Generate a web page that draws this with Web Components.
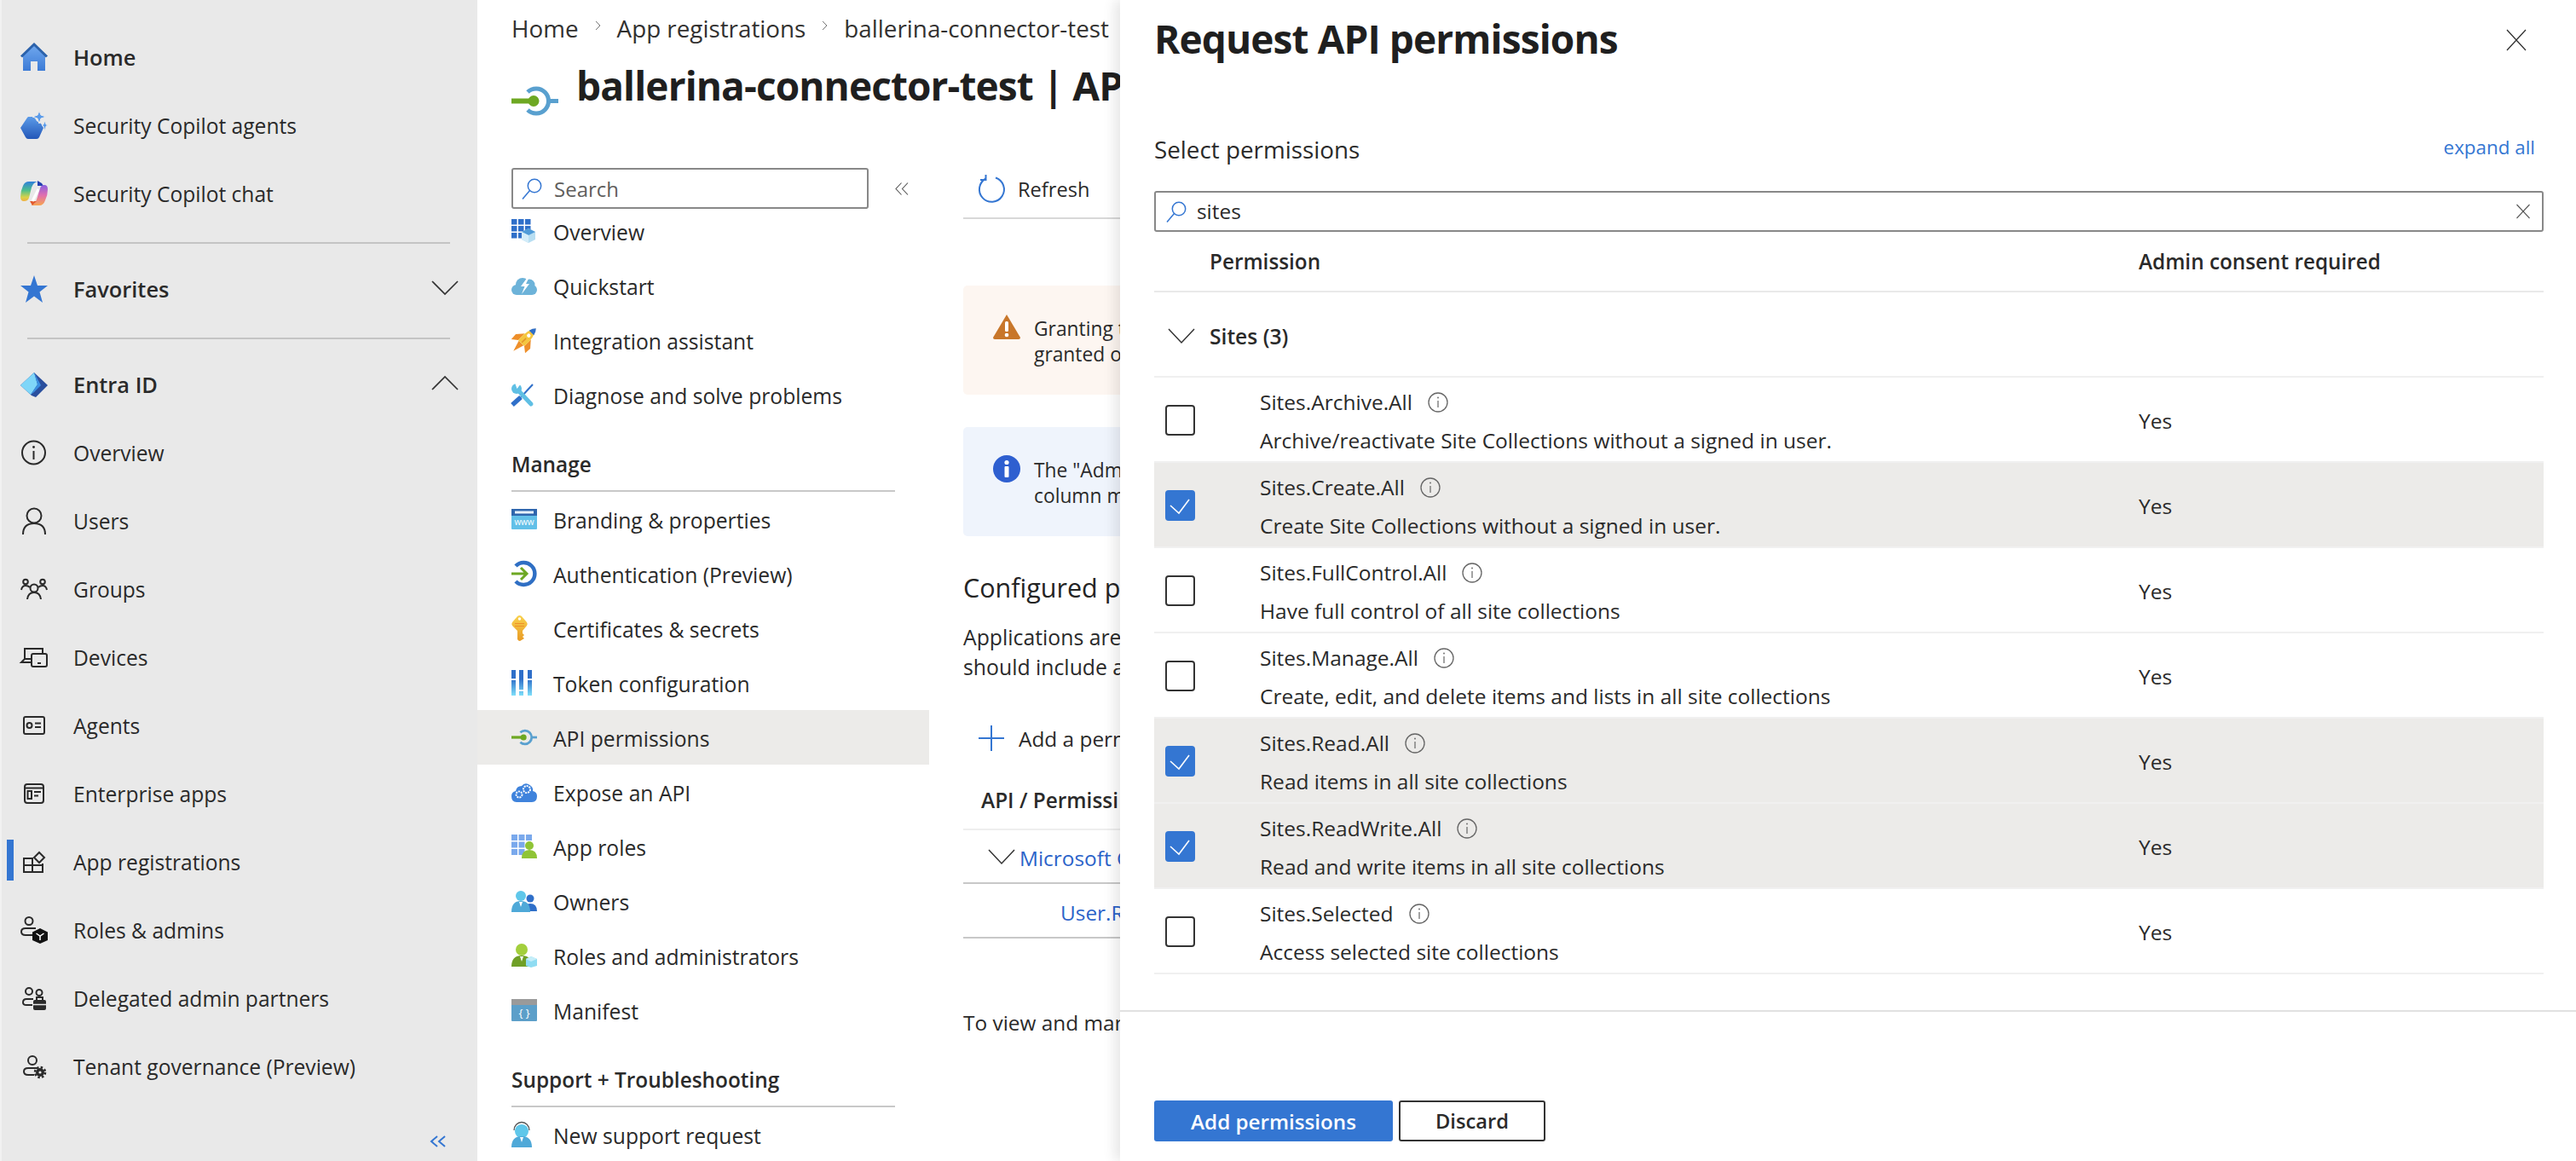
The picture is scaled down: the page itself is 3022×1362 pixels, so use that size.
<!DOCTYPE html>
<html lang="en">
<head>
<meta charset="utf-8">
<title>Request API permissions</title>
<style>
html,body{margin:0;padding:0;width:3022px;height:1362px;overflow:hidden;background:#3d6a5f}
body{font-family:"Open Sans","Noto Sans",sans-serif;font-size:24.6px;color:#2a2a2a}
</style>
</head>
<body>
<app-shell>
  <left-nav>
    <nav-row icon="home" strong>Home</nav-row>
    <nav-row icon="agents">Security Copilot agents</nav-row>
    <nav-row icon="chat">Security Copilot chat</nav-row>
    <nav-rule></nav-rule>
    <nav-row icon="star" strong chevron="down">Favorites</nav-row>
    <nav-rule></nav-rule>
    <nav-row icon="entra" strong chevron="up">Entra ID</nav-row>
    <nav-row icon="ninfo">Overview</nav-row>
    <nav-row icon="user">Users</nav-row>
    <nav-row icon="groups">Groups</nav-row>
    <nav-row icon="devices">Devices</nav-row>
    <nav-row icon="idcard">Agents</nav-row>
    <nav-row icon="entapps">Enterprise apps</nav-row>
    <nav-row icon="appreg" active>App registrations</nav-row>
    <nav-row icon="rolesnav">Roles &amp; admins</nav-row>
    <nav-row icon="delegated">Delegated admin partners</nav-row>
    <nav-row icon="tenant">Tenant governance (Preview)</nav-row>
    <nav-collapse></nav-collapse>
  </left-nav>
  <main-area>
    <crumb-bar>
      <span>Home</span><x-icon name="crumb"></x-icon><span>App registrations</span><x-icon name="crumb"></x-icon><span>ballerina-connector-test</span>
    </crumb-bar>
    <page-title>ballerina-connector-test | API permissions</page-title>
    <blade-body>
      <res-menu>
        <menu-search></menu-search>
        <menu-list>
          <menu-row icon="m-overview">Overview</menu-row>
          <menu-row icon="m-quick">Quickstart</menu-row>
          <menu-row icon="m-rocket">Integration assistant</menu-row>
          <menu-row icon="m-tools">Diagnose and solve problems</menu-row>
          <menu-head>Manage</menu-head>
          <menu-row icon="m-www">Branding &amp; properties</menu-row>
          <menu-row icon="m-auth">Authentication (Preview)</menu-row>
          <menu-row icon="m-key">Certificates &amp; secrets</menu-row>
          <menu-row icon="m-token">Token configuration</menu-row>
          <menu-row icon="m-api" selected>API permissions</menu-row>
          <menu-row icon="m-expose">Expose an API</menu-row>
          <menu-row icon="m-roles">App roles</menu-row>
          <menu-row icon="m-owners">Owners</menu-row>
          <menu-row icon="m-admins">Roles and administrators</menu-row>
          <menu-row icon="m-manifest">Manifest</menu-row>
          <menu-head>Support + Troubleshooting</menu-head>
          <menu-row icon="m-support">New support request</menu-row>
        </menu-list>
      </res-menu>
      <blade-content></blade-content>
    </blade-body>
  </main-area>
  <perm-panel>
    <perm-row title-text="Sites.Archive.All" desc="Archive/reactivate Site Collections without a signed in user."></perm-row>
    <perm-row checked title-text="Sites.Create.All" desc="Create Site Collections without a signed in user."></perm-row>
    <perm-row title-text="Sites.FullControl.All" desc="Have full control of all site collections"></perm-row>
    <perm-row title-text="Sites.Manage.All" desc="Create, edit, and delete items and lists in all site collections"></perm-row>
    <perm-row checked title-text="Sites.Read.All" desc="Read items in all site collections"></perm-row>
    <perm-row checked title-text="Sites.ReadWrite.All" desc="Read and write items in all site collections"></perm-row>
    <perm-row title-text="Sites.Selected" desc="Access selected site collections"></perm-row>
  </perm-panel>
</app-shell>

<script>
const apiIcon = `<path d="M19 6A14.5 14.5 0 1 1 19 27" fill="none" stroke="#59a0cf" stroke-width="5"/><path d="M42 16.5H55" stroke="#59a0cf" stroke-width="5"/><path d="M0 16.5H26" stroke="#6ea823" stroke-width="6"/><circle cx="26" cy="16.5" r="6.5" fill="#6ea823"/>`;
const S = 'fill="none" stroke="#2a2a2a" stroke-width="2"';
const ICONS = {
  home:[32,34,`<defs><linearGradient id="g" x1="0" y1="0" x2="0" y2="1"><stop offset="0" stop-color="#70a8ee"/><stop offset="1" stop-color="#3c7bd6"/></linearGradient></defs><path d="M16 3 3 14V33H12V22H20V33H29V14Z" fill="url(#g)"/><path d="M1 16.500 16 2 31 16.500" fill="none" stroke="#2b62ab" stroke-width="3"/>`],
  agents:[32,34,`<defs><linearGradient id="g" x1="0" y1="0" x2="0" y2="1"><stop offset="0" stop-color="#5b9be8"/><stop offset="1" stop-color="#2357b8"/></linearGradient></defs><path d="M9 7H16L19 12 24 15 27 20 22 31Q21 33 19 33H9Q7 33 6 31L0 20 8 8Z" fill="url(#g)"/><path d="M22 0 24 5 30 7 24 9 22 15 20 9 14 7 20 5Z" fill="#5a9bea" stroke="#e9e9e9" stroke-width="1"/><path d="M28.500 12 30 16 32 17 30 18 28.500 23 27 18 25 17 27 16Z" fill="#5a9bea" stroke="#e9e9e9" stroke-width=".8"/>`],
  chat:[32,30,`<defs><linearGradient id="a" x1="0" y1="0" x2="0" y2="1"><stop offset="0" stop-color="#2f7fdc"/><stop offset=".45" stop-color="#4fc08a"/><stop offset=".8" stop-color="#d9d24a"/><stop offset="1" stop-color="#f0b040"/></linearGradient><linearGradient id="b" x1="0" y1="0" x2="0" y2="1"><stop offset="0" stop-color="#8a5fe0"/><stop offset=".5" stop-color="#e06fb0"/><stop offset="1" stop-color="#f7a44e"/></linearGradient></defs><path d="M20 0 25 3 27 6H20Z" fill="#2340b0"/><path d="M10 1H20Q15 2 13 8L10 20Q9 24 4 24 0 24 0 19 0 12 3 6 5 1 10 1Z" fill="url(#a)"/><path d="M22 29H12Q17 28 19 22L23 9Q24 5 28 5 32 5 32 10 32 17 29 23 27 29 22 29Z" fill="url(#b)"/><path d="M11 24 14 29 19 24Z" fill="#e25a2e"/><path d="M21 10 14 24" stroke="#fff" stroke-width="3"/>`],
  star:[32,32,`<path d="M16 0 20 12H32L22.500 19.500 26 32 16 24.500 6 32 9.500 19.500 0 12H12Z" fill="#3476d2"/>`],
  entra:[32,29,`<path d="M16 0 0 15 13 27 18 29 32 15Z" fill="#2a4f9e"/><path d="M16 0 0 15 12 26 20 14Z" fill="#7fd6f8"/><path d="M16 0 24 15 16 23 12 26 20 14Z" fill="#3b8ee0"/>`],
  ninfo:[30,30,`<circle cx="14.500" cy="15" r="13.500" ${S}/><path d="M14.500 13V23" ${S}/><circle cx="14.500" cy="8.500" r="1.400" fill="#2a2a2a"/>`],
  user:[32,32,`<circle cx="16" cy="10" r="8.500" ${S}/><path d="M3 32Q3 19 16 19 29 19 29 32" ${S}/>`],
  groups:[32,24,`<circle cx="16" cy="11" r="4.500" ${S}/><path d="M8 24Q9 16 16 16 23 16 24 24" ${S}/><circle cx="6" cy="3.500" r="2.800" ${S}/><circle cx="26" cy="3.500" r="2.800" ${S}/><path d="M1 13Q2 8 6 8 9 8 11 10M31 13Q30 8 26 8 23 8 21 10" ${S}/>`],
  devices:[32,24,`<path d="M5 14V2H26V7M12 18H1L5 14H12" ${S}/><rect x="13" y="8" width="18" height="15" rx="2" ${S}/><path d="M20 19H24" ${S}/>`],
  idcard:[26,22,`<rect x="1" y="1" width="24" height="20" rx="2" ${S}/><circle cx="7.500" cy="11" r="3" ${S}/><path d="M14 8.500H21M14 13H21" ${S}/>`],
  entapps:[24,24,`<rect x="1" y="1" width="22" height="22" rx="3" ${S}/><path d="M1 5.500H23M12 10H20M12 14.500H17" ${S}/><rect x="4.500" y="9" width="4.500" height="9" ${S}/>`],
  appreg:[26,25,`<path d="M1 8H11V24H1ZM1 16H23V24H11M11 16H23V14" ${S}/><path d="M19 1 25 7 19 13 13 7Z" ${S}/>`],
  rolesnav:[32,32,`<circle cx="10" cy="5.500" r="4.500" ${S}/><path d="M18 14H6Q1 14 1 18 1 22 6 22H14" ${S}/><path d="M23 14 32 18.500V28L23 32 14 28V18.500Z" fill="#111"/><path d="M18.500 20 23 23 27.500 20M23 23V28" fill="none" stroke="#fff" stroke-width="1.500"/>`],
  delegated:[28,27,`<circle cx="8" cy="5" r="4" ${S}/><circle cx="20" cy="6.500" r="3.500" ${S}/><path d="M13 14H5Q1 14 1 18 1 21 5 21H12" ${S}/><rect x="13" y="15" width="15" height="12" rx="2" fill="#2a2a2a"/><path d="M17 15V12H24V15" ${S}/><path d="M13 20.500H28" stroke="#e9e9e9" stroke-width="1.500"/>`],
  tenant:[27,27,`<circle cx="11" cy="6" r="5" ${S}/><path d="M17 15H6Q1 15 1 19 1 23 6 23H13" ${S}/><circle cx="20" cy="20" r="5" fill="#2a2a2a"/><circle cx="20" cy="20" r="6" fill="none" stroke="#2a2a2a" stroke-width="2.500" stroke-dasharray="2.500 2.200"/><circle cx="20" cy="20" r="1.600" fill="#e9e9e9"/>`],
  chevdown:[32,17,`<path d="M1 1 16 16 31 1" fill="none" stroke="#333" stroke-width="1.700"/>`],
  chevup:[32,17,`<path d="M1 16 16 1 31 16" fill="none" stroke="#333" stroke-width="1.700"/>`],
  collapse:[20,14,`<path d="M9 1 2 7 9 13M18 1 11 7 18 13" fill="none" stroke="#3476d2" stroke-width="2"/>`],
  crumb:[7,12,`<path d="M1 1 6 6 1 11" fill="none" stroke="#777" stroke-width="1"/>`],
  app:[55,33,apiIcon],
  search:[24,25,`<circle cx="15" cy="9" r="7.700" fill="none" stroke="#3476d2" stroke-width="1.500"/><path d="M9.500 14.500 1 24.500" stroke="#3476d2" stroke-width="1.500"/>`],
  menucollapse:[16,15,`<path d="M7.500 .5 1 7.500 7.500 14.500M15 .5 8.500 7.500 15 14.500" fill="none" stroke="#555" stroke-width="1.100"/>`],
  refresh:[32,33,`<path d="M21 3.500A14.500 14.500 0 1 1 9.500 4.500" fill="none" stroke="#3476d2" stroke-width="2"/><path d="M9.500 0V6H3" fill="none" stroke="#3476d2" stroke-width="2"/>`],
  warn:[32,30,`<path d="M16 1 32 28Q32 30 30 30H2Q0 30 0 28Z" fill="#c8762a"/><rect x="14" y="9" width="4" height="12" rx="1.500" fill="#fff"/><circle cx="16" cy="25" r="2.300" fill="#fff"/>`],
  info:[32,32,`<circle cx="16" cy="16" r="16" fill="#2e5fd0"/><circle cx="16" cy="8.500" r="2.600" fill="#fff"/><rect x="13.500" y="13" width="5" height="13" rx="1" fill="#fff"/>`],
  plus:[30,30,`<path d="M15 0V30M0 15H30" stroke="#3476d2" stroke-width="2"/>`],
  chevsmall:[32,18,`<path d="M1 1 16 17 31 1" fill="none" stroke="#333" stroke-width="1.500"/>`],
  close:[24,24,`<path d="M1 0 23 24M23 0 1 24" stroke="#333" stroke-width="1.300"/>`],
  clear:[16,16,`<path d="M.5 0 15.500 16M15.500 0 .5 16" stroke="#555" stroke-width="1.100"/>`],
  tick:[35,36,`<path d="M6 18 16 27 28 11" fill="none" stroke="#fff" stroke-width="1.600"/>`],
  rowinfo:[24,24,`<circle cx="12" cy="12" r="11" fill="none" stroke="#666" stroke-width="1.300"/><path d="M12 10V18" stroke="#666" stroke-width="1.200"/><circle cx="12" cy="6.500" r=".9" fill="#666"/>`],
  "m-overview":[28,28,`<g fill="#2f6fc9"><rect width="6.500" height="6.500"/><rect x="8" width="6.500" height="6.500"/><rect x="16" width="6.500" height="6.500"/><rect y="8" width="6.500" height="6.500"/><rect x="8" y="8" width="6.500" height="6.500"/><rect x="16" y="8" width="6.500" height="6.500"/><rect y="16" width="6.500" height="6.500"/><rect x="8" y="16" width="6.500" height="6.500"/></g><path d="M20 11 28 15V24L20 28 12 24V15Z" fill="#b7def2"/><path d="M12 15 20 19 28 15 20 11Z" fill="#4f9bd8"/><path d="M20 19V28L12 24V15Z" fill="#d3ecf8"/>`],
  "m-quick":[30,21,`<g fill="#6db3d9"><circle cx="6" cy="15" r="6"/><circle cx="13" cy="9" r="8"/><circle cx="21" cy="9" r="6.500"/><circle cx="24" cy="15" r="6"/><rect x="6" y="12" width="18" height="9"/></g><path d="M19 0 11 11H15.500L12 20 21 8H17L21 0Z" fill="#fff"/>`],
  "m-rocket":[30,30,`<g transform="rotate(45 15 15)"><path d="M11 20H19L15 33Z" fill="#ee8f2a"/><path d="M10 9 3 17 3.500 25 10 20Z" fill="#ee8f2a"/><path d="M20 9 27 17 26.500 25 20 20Z" fill="#ee8f2a"/><path d="M15 -4Q21.500 4 20 20H10Q8.500 4 15 -4Z" fill="#f4c63f"/><path d="M15 -4.500Q18 -1.500 19 3H11Q12 -1.500 15 -4.500Z" fill="#2f6fc9"/><circle cx="15" cy="7.500" r="2.200" fill="#fff"/><path d="M15 12V19" stroke="#e2952a" stroke-width="1.500"/></g>`],
  "m-tools":[26,27,`<path d="M1 25 11 16" stroke="#2f6fc9" stroke-width="5.500"/><path d="M11 16 25 1" stroke="#2f6fc9" stroke-width="2"/><path d="M7 7 23 24" stroke="#5fbfe4" stroke-width="5" stroke-linecap="round"/><circle cx="6" cy="6" r="6" fill="#5fbfe4"/><path d="M4-1H12L6.500 6Z" fill="#fff"/>`],
  "m-www":[30,24,`<rect width="30" height="24" rx="1" fill="#62c0e8"/><rect width="30" height="8" fill="#2f66ad"/><rect x="4" y="2.500" width="22" height="3" fill="#e8f2fb"/><text x="15" y="19" font-size="10" fill="#fff" text-anchor="middle" font-family="Open Sans">www</text>`],
  "m-auth":[27,30,`<path d="M5 6A13 13 0 1 1 5 24" fill="none" stroke="#2f6fc4" stroke-width="4.500"/><path d="M0 15H18M11 8 18 15 11 22" fill="none" stroke="#6ea823" stroke-width="3"/>`],
  "m-key":[20,30,`<defs><linearGradient id="k" x1="0" y1="0" x2="0" y2="1"><stop offset="0" stop-color="#f9d24e"/><stop offset="1" stop-color="#e89a24"/></linearGradient></defs><path d="M9.500 0Q11 0 12 1L18 8Q19.500 10 18 12L13 18V21L15 23 13 25 15 27 10 30Q8 30 7 28V18L1 12Q-.5 10 1 8L7 1Q8 0 9.500 0Z" fill="url(#k)"/><circle cx="9.500" cy="4" r="1.700" fill="#fff"/><path d="M4 9.500H15M4 12.500H15" stroke="#ee8f2a" stroke-width="1.200"/>`],
  "m-token":[24,30,`<defs><linearGradient id="t" x1="0" y1="0" x2="0" y2="1"><stop offset="0" stop-color="#2f6fc9"/><stop offset=".35" stop-color="#2f6fc9"/><stop offset="1" stop-color="#7fe0fa"/></linearGradient></defs><rect x="0" width="5" height="30" fill="url(#t)"/><rect x="9" width="5" height="30" fill="url(#t)"/><rect x="19" width="5" height="30" fill="url(#t)"/><g fill="#e8f2fb"><rect y="10" width="5" height="2"/><rect x="9" y="23" width="5" height="2"/><rect x="19" y="10" width="5" height="2"/></g>`],
  "m-api":[30,18,`<g transform="scale(.545)">${apiIcon}</g>`],
  "m-expose":[30,23,`<path d="M6 23Q0 23 0 16 0 11 5 10 6 4 12 4 15 0 20 2 26 5 25 10 30 11 30 16 30 23 24 23Z" fill="#3f83dc"/><circle cx="9" cy="14" r="3.500" fill="none" stroke="#fff" stroke-width="2" stroke-dasharray="2 1"/><circle cx="18" cy="8" r="4" fill="none" stroke="#fff" stroke-width="2" stroke-dasharray="2 1"/>`],
  "m-roles":[30,28,`<g fill="#7aa9ec"><rect width="7" height="7"/><rect x="8.500" width="7" height="7"/><rect x="17" width="7" height="7"/><rect y="8.500" width="7" height="7"/><rect x="8.500" y="8.500" width="7" height="7"/><rect y="17" width="7" height="7"/><rect x="8.500" y="17" width="7" height="7"/></g><circle cx="21" cy="13" r="5" fill="#8fc436"/><path d="M12 28Q12 18 21 18 30 18 30 28Z" fill="#8fc436"/>`],
  "m-owners":[30,25,`<circle cx="22" cy="9" r="4.500" fill="#2f6fc9"/><path d="M15 24Q15 15 22 15 30 15 30 24Z" fill="#2f6fc9"/><circle cx="11" cy="6" r="6" fill="#5fc7ea"/><path d="M0 25Q0 12 11 12 22 12 22 25Z" fill="#4fa9d8"/><path d="M9 13H13L11 19Z" fill="#fff"/>`],
  "m-admins":[30,28,`<circle cx="12" cy="7" r="7" fill="#a3cf3d"/><path d="M0 27Q0 14 12 14 24 14 24 27Z" fill="#6f9f26"/><path d="M10 15H14L12 21Z" fill="#fff"/><path d="M23 15 30 18V26L23 28 17 26V18Z" fill="#8fdcf2"/><path d="M17 18 23 21 30 18 23 15Z" fill="#c6eef9"/>`],
  "m-manifest":[30,26,`<rect width="30" height="26" rx="1" fill="#5c9fc9"/><rect width="30" height="7" fill="#9a9a9a"/><text x="15" y="21" font-size="13" fill="#fff" text-anchor="middle" font-family="Open Sans">{ }</text>`],
  "m-support":[24,30,`<circle cx="12" cy="11" r="8" fill="#5fc7ea"/><path d="M0 30Q0 17 12 17 24 17 24 30Z" fill="#4fa9d8"/><path d="M10 18H14L12 24Z" fill="#fff"/><path d="M3 10A9 9.500 0 0 1 21 10" fill="none" stroke="#555" stroke-width="1.300"/>`],
};

function define(name, render) {
  customElements.define(name, class extends HTMLElement {
    connectedCallback() {
      if (this.shadowRoot) return;
      this.attachShadow({mode:"open"}).innerHTML = render(this);
    }
  });
}

define("x-icon", el => {
  const [w,h,body] = ICONS[el.getAttribute("name")];
  return `<style>:host{display:inline-flex;flex:none;line-height:0}</style><svg width="${w}" height="${h}" viewBox="0 0 ${w} ${h}" overflow="visible">${body}</svg>`;
});

define("app-shell", () => `<style>:host{display:flex;position:relative;width:3022px;height:1362px;overflow:hidden;background:#3d6a5f}</style><slot></slot>`);

define("left-nav", () => `<style>:host{display:flex;flex-direction:column;flex:none;box-sizing:border-box;width:560px;height:1362px;padding-top:27px;background:#e9e9e9;border-left:2px solid #f1f1f1;border-radius:0 0 0 8px/0 0 38px 0;position:relative}</style><slot></slot>`);

define("nav-row", el => {
  const c = el.getAttribute("chevron");
  const st = el.hasAttribute("strong");
  return `<style>
  :host{display:flex;align-items:center;flex:none;height:80px;padding-left:22px;position:relative;font-weight:${st?600:400};font-size:${st?"25.4px":"24.6px"}}
  .ico{width:32px;height:34px;display:flex;align-items:center;justify-content:center;margin-right:30px;flex:none}
  .lab{flex:1;white-space:nowrap}
  .chev{margin:0 22px 4px 0}
  .bar{position:absolute;left:6px;top:14px;width:8px;height:48px;background:#3476d2}
  </style>
  ${el.hasAttribute("active")?'<div class="bar"></div>':''}
  <div class="ico"><x-icon name="${el.getAttribute("icon")}"></x-icon></div><div class="lab"><slot></slot></div>
  ${c?`<x-icon class="chev" name="chev${c}"></x-icon>`:''}`;
});
define("nav-rule", () => `<style>:host{display:block;flex:none;height:2px;margin:17px 32px 13px 30px;background:#c4c4c4}</style>`);
define("nav-collapse", () => `<style>:host{display:flex;justify-content:flex-end;flex:1;padding:0 36px 16px 0;align-items:flex-end}</style><x-icon name="collapse"></x-icon>`);

define("main-area", () => `<style>:host{display:flex;flex-direction:column;flex:none;width:2462px;height:1362px;background:#fff;overflow:hidden;color:#2a2a2a}</style><slot></slot>`);
define("crumb-bar", () => `<style>:host{display:flex;align-items:center;flex:none;height:66px;margin-bottom:4px;padding-left:40px;gap:19px;font-size:27.800px;color:#323130;white-space:nowrap}::slotted(x-icon){margin-top:-6px}</style><slot></slot>`);
define("page-title", () => `<style>:host{display:flex;align-items:flex-start;flex:none;height:127px;padding-left:40px;box-sizing:border-box;white-space:nowrap}
 x-icon{margin-top:32px;margin-right:21px} .t{font-size:46px;font-weight:700;letter-spacing:-.9px;line-height:60px;color:#1f1f1f}</style><x-icon name="app"></x-icon><div class="t"><slot></slot></div>`);
define("blade-body", () => `<style>:host{display:flex;flex:1;min-height:0}</style><slot></slot>`);
define("res-menu", () => `<style>:host{display:flex;flex-direction:column;flex:none;width:530px}</style><slot></slot>`);
define("menu-search", () => `<style>
 :host{display:flex;align-items:center;flex:none;height:48px;padding-left:40px;position:relative;z-index:1}
 .box{display:flex;align-items:center;box-sizing:border-box;width:419px;height:48px;border:2px solid #888;border-radius:3px;background:#fff;padding-left:10px;color:#605e5c;font-size:24px}
 .box x-icon{margin-right:14px}
 .col{margin-left:31px}
 </style><div class="box"><x-icon name="search"></x-icon>Search</div><x-icon class="col" name="menucollapse"></x-icon>`);
define("menu-list", () => `<style>:host{display:block;margin-top:-6px}</style><slot></slot>`);
define("menu-row", el => `<style>
 :host{display:flex;align-items:center;height:64px;padding-left:40px;font-size:24.7px;white-space:nowrap;${el.hasAttribute("selected")?"background:#ecebe9;":""}}
 .ico{width:49px;display:flex;flex:none;align-items:center}
 .lab{padding-top:3px}
 </style><div class="ico"><x-icon name="${el.getAttribute("icon")}"></x-icon></div><div class="lab"><slot></slot></div>`);
define("menu-head", () => `<style>:host{display:block;box-sizing:border-box;height:82px;margin:0 40px;padding-top:32px;border-bottom:2px solid #c8c8c8;font-weight:600;font-size:24.4px;line-height:36px;white-space:nowrap}</style><slot></slot>`);

define("notice-box", el => `<style>
 :host{display:flex;box-sizing:border-box;height:128px;padding:33px 0 0 35px;gap:16px;border-radius:5px;background:${el.getAttribute("tone")==="warn"?"#fdf6f1":"#eff4fc"};font-size:22.800px;line-height:30px;white-space:nowrap}
 div{margin-top:3px}
 </style><x-icon name="${el.getAttribute("tone")==="warn"?"warn":"info"}"></x-icon><div><slot></slot></div>`);
define("blade-content", () => `<style>
 :host{display:block;flex:none;width:1000px;margin-left:40px;white-space:nowrap}
 .tb{display:flex;align-items:center;box-sizing:border-box;height:60px;padding:0 0 9px 17px;border-bottom:2px solid #d8d8d8;font-size:23.600px}
 .tb x-icon{margin-right:15px}
 .tb i{display:block;width:2px;height:30px;background:#ddd;margin-left:40px}
 notice-box{margin-bottom:38px}
 .gap{height:78px}
 h2{margin:0 0 19px;font-weight:400;font-size:30.500px;line-height:44px;color:#242424}
 .p{font-size:24.800px;line-height:35px}
 .add{display:flex;align-items:center;height:64px;margin-top:34px;padding-left:18px;gap:17px;font-size:24.400px}
 .th{display:flex;align-items:center;box-sizing:border-box;height:76px;padding:6px 0 0 21px;border-bottom:2px solid #eee;font-weight:600;font-size:24.400px}
 .r1{display:flex;align-items:center;box-sizing:border-box;height:63px;padding-left:29px;gap:5px;border-bottom:2px solid #c8c8c8;color:#2b63c9;font-size:24.400px}
 .r1 span,.r2 span{padding-top:4px}
 .r2{display:flex;align-items:center;box-sizing:border-box;height:64px;padding-left:114px;border-bottom:2px solid #c8c8c8;color:#2b63c9;font-size:24.400px}
 .to{margin-top:81px;font-size:24.400px;line-height:36px}
 </style>
 <div class="tb"><x-icon name="refresh"></x-icon>Refresh<i></i></div>
 <div class="gap"></div>
 <notice-box tone="warn">Granting t<br>granted o</notice-box>
 <notice-box tone="info">The "Adm<br>column m</notice-box>
 <h2>Configured p</h2>
 <div class="p">Applications are<br>should include a</div>
 <div class="add"><x-icon name="plus"></x-icon>Add a perm</div>
 <div class="th">API / Permissi</div>
 <div class="r1"><x-icon name="chevsmall"></x-icon><span>Microsoft G</span></div>
 <div class="r2"><span>User.R</span></div>
 <div class="to">To view and man</div>`);

define("perm-panel", () => `<style>
 :host{display:flex;flex-direction:column;position:absolute;left:1314px;top:0;box-sizing:border-box;width:1708px;height:1362px;padding-left:40px;background:#fff;box-shadow:-6px 0 14px rgba(0,0,0,.1);white-space:nowrap;color:#2a2a2a}
 .head{display:flex;align-items:center;justify-content:space-between;height:94px;padding-right:58px}
 h1{margin:0 0 5px;font-size:46px;font-weight:700;letter-spacing:-.9px;color:#1f1f1f}
 .sel{display:flex;justify-content:space-between;align-items:center;height:50px;margin-top:56px;padding-right:48px;font-size:27.800px}
 .sel a{color:#3476d2;font-size:22.400px;padding-bottom:6px}
 .sr{display:flex;align-items:center;box-sizing:border-box;height:48px;margin:24px 38px 0 0;padding:0 14px 0 12px;border:2px solid #888;border-radius:3px;font-size:24.400px}
 .sr x-icon:first-child{margin-right:12px}
 .sr span{flex:1;padding-bottom:1px}
 .cols{display:grid;grid-template-columns:1155px 1fr;align-items:center;box-sizing:border-box;height:71px;margin-right:38px;border-bottom:2px solid #e9e9e9;font-size:24.300px;font-weight:600}
 .cols span:first-child{padding-left:65px}
 .grp{display:flex;align-items:center;box-sizing:border-box;height:100px;margin-right:38px;padding:4px 0 0 16px;gap:17px;border-bottom:2px solid #f0f0f0;font-weight:600;font-size:24.600px}
 .list{margin-right:38px}
 .foot{margin:42px 0 0 -40px;border-top:2px solid #e1e1e1;padding:104px 0 0 40px;display:flex;gap:7px}
 .btn{display:flex;align-items:center;justify-content:center;box-sizing:border-box;height:48px;border-radius:3px;font-size:24.200px;font-weight:600}
 .pri{width:280px;background:#3476d2;color:#fff}
 .sec{width:172px;border:2px solid #333;font-weight:600;font-size:23.700px;color:#2a2a2a}
 </style>
 <div class="head"><h1>Request API permissions</h1><x-icon name="close"></x-icon></div>
 <div class="sel"><span>Select permissions</span><a>expand all</a></div>
 <div class="sr"><x-icon name="search"></x-icon><span>sites</span><x-icon name="clear"></x-icon></div>
 <div class="cols"><span>Permission</span><span>Admin consent required</span></div>
 <div class="grp"><x-icon name="chevsmall"></x-icon>Sites (3)</div>
 <div class="list"><slot></slot></div>
 <div class="foot"><div class="btn pri">Add permissions</div><div class="btn sec">Discard</div></div>`);

define("perm-row", el => {
  const on = el.hasAttribute("checked");
  return `<style>
 :host{display:grid;grid-template-columns:1155px 1fr;align-items:center;box-sizing:border-box;height:100px;padding-top:2px;border-bottom:2px solid #f0f0f0;${on?"background:#ecebe9;":""}font-size:24.500px}
 .l{display:flex;align-items:center}
 .cb{box-sizing:border-box;width:35px;height:36px;margin:0 76px 0 13px;border-radius:4px;flex:none;${on?"background:#3476d2;":"border:2px solid #333;"}}
 .tx{margin-top:3px}
 .t{display:flex;align-items:center;gap:18px;line-height:44px}
 .d{line-height:46px}
 .y{padding-top:1px}
 </style><div class="l"><div class="cb">${on?'<x-icon name="tick"></x-icon>':''}</div><div class="tx"><div class="t">${el.getAttribute("title-text")}<x-icon name="rowinfo"></x-icon></div><div class="d">${el.getAttribute("desc")}</div></div></div><div class="y">Yes</div>`;
});
</script>
</body>
</html>
